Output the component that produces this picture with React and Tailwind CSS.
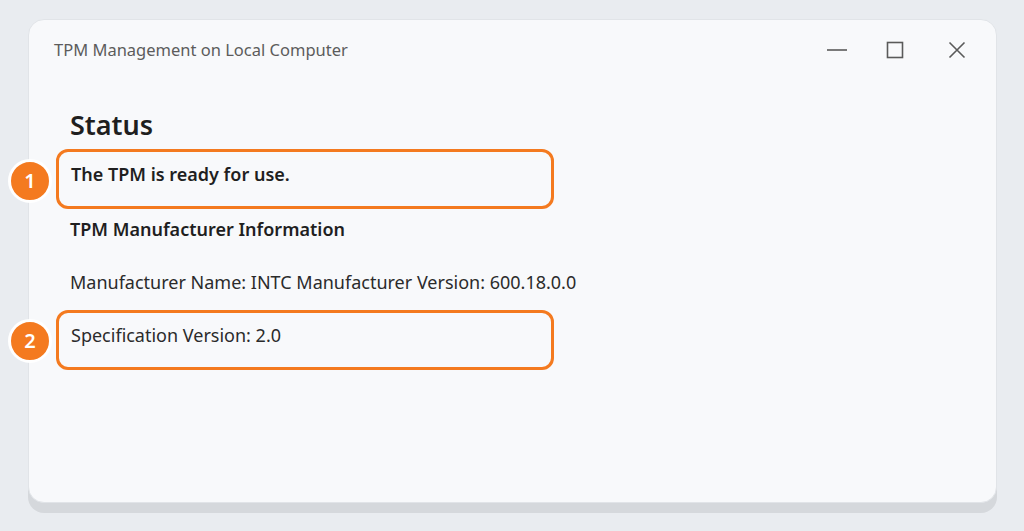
function Badge({ n, className }) {
  return (
    <div
      className={`absolute left-[8px] w-[44px] h-[44px] rounded-full bg-[#f47a1f] border-[3px] border-white flex items-center justify-center text-white text-[20px] font-semibold ${className}`}
    >
      {n}
    </div>
  );
}

function Callout({ children }) {
  return (
    <div className="ml-[27px] w-[498px] h-[60px] rounded-[12px] border-[3px] border-[#f47a1f] pl-[12px] pt-[9px]">
      {children}
    </div>
  );
}

export default function App() {
  return (
    <div
      className="relative w-[1024px] h-[531px] bg-[#e9ecf0] pt-[19px] pl-[28px] pr-[27px]"
      style={{ fontFamily: '"Noto Sans", "Open Sans", sans-serif' }}
    >
      {/* Window */}
      <div className="h-[484px] rounded-[16px] bg-[#f8f9fb] border border-[#e1e4e8] shadow-[0_10px_0_#d5d8dc] flex flex-col">
        {/* Title bar */}
        <div className="flex items-center justify-between pl-[25px] pr-[29px] pt-[18px]">
          <span className="text-[16.5px] text-[#5c5c5c]">TPM Management on Local Computer</span>
          <div className="flex items-center text-[#5a5a5a]">
            <svg width="20" height="20" viewBox="0 0 20 20" fill="none" stroke="currentColor" strokeWidth="1.6">
              <line x1="0" y1="10" x2="20" y2="10" />
            </svg>
            <svg className="ml-[38px]" width="20" height="20" viewBox="0 0 20 20" fill="none" stroke="currentColor" strokeWidth="1.6">
              <rect x="2.5" y="2.5" width="15" height="15" />
            </svg>
            <svg className="ml-[42px]" width="20" height="20" viewBox="0 0 20 20" fill="none" stroke="currentColor" strokeWidth="1.6">
              <path d="M2.5 2.5 L17.5 17.5 M17.5 2.5 L2.5 17.5" />
            </svg>
          </div>
        </div>

        {/* Content */}
        <div className="flex flex-col text-[#1f1f1f]">
          <h1 className="pl-[41px] mt-[44px] text-[27px] font-semibold leading-[36px]">Status</h1>

          <div className="mt-[6px]">
            <Callout>
              <span className="text-[18px] font-semibold">The TPM is ready for use.</span>
            </Callout>
          </div>

          <div className="pl-[41px] mt-[6px] text-[18px] font-semibold leading-[28px]">
            TPM Manufacturer Information
          </div>

          <div className="pl-[41px] mt-[25px] text-[18px] leading-[28px] text-[#2b2b2b]">
            Manufacturer Name: INTC Manufacturer Version: 600.18.0.0
          </div>

          <div className="mt-[14px]">
            <Callout>
              <span className="text-[18px] text-[#2b2b2b]">Specification Version: 2.0</span>
            </Callout>
          </div>
        </div>
      </div>

      <Badge n="1" className="top-[159px]" />
      <Badge n="2" className="top-[319px]" />
    </div>
  );
}
